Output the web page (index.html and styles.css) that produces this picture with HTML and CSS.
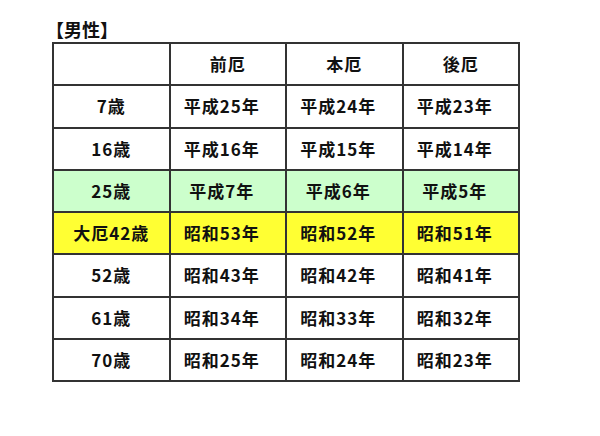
FILE: index.html
```html
<!DOCTYPE html>
<html lang="ja">
<head>
<meta charset="utf-8">
<link rel="stylesheet" href="styles.css">
</head>
<body>
<div class="page">
  <div class="title">【男性】</div>
  <table class="yaku">
    <tr><th></th><th>前厄</th><th>本厄</th><th>後厄</th></tr>
    <tr><td>7歳</td><td>平成25年</td><td>平成24年</td><td>平成23年</td></tr>
    <tr><td>16歳</td><td>平成16年</td><td>平成15年</td><td>平成14年</td></tr>
    <tr class="green"><td>25歳</td><td>平成7年</td><td>平成6年</td><td>平成5年</td></tr>
    <tr class="yellow"><td>大厄42歳</td><td>昭和53年</td><td>昭和52年</td><td>昭和51年</td></tr>
    <tr><td>52歳</td><td>昭和43年</td><td>昭和42年</td><td>昭和41年</td></tr>
    <tr><td>61歳</td><td>昭和34年</td><td>昭和33年</td><td>昭和32年</td></tr>
    <tr><td>70歳</td><td>昭和25年</td><td>昭和24年</td><td>昭和23年</td></tr>
  </table>
</div>
</body>
</html>
```
FILE: styles.css
```css
html, body {
  margin: 0;
  padding: 0;
  background: #ffffff;
}
.page {
  padding: 17px 0 0 52px;
  font-family: "Noto Sans CJK JP", "Noto Sans", sans-serif;
  font-weight: bold;
  color: #111;
}
.title {
  font-size: 18px;
  line-height: 24px;
  height: 25px;
  margin-left: -6px;
}
.yaku {
  border-collapse: collapse;
  table-layout: fixed;
  width: 468px;
}
.yaku th, .yaku td {
  border: 2px solid #333;
  height: 40.25px;
  padding: 0;
  text-align: center;
  vertical-align: middle;
  font-size: 17px;
  font-weight: bold;
  letter-spacing: 1px;
  line-height: 20px;
}
.yaku td + td {
  padding-right: 12px;
}
.yaku .green td {
  background: #ccffcc;
}
.yaku .yellow td {
  background: #ffff33;
}
```
